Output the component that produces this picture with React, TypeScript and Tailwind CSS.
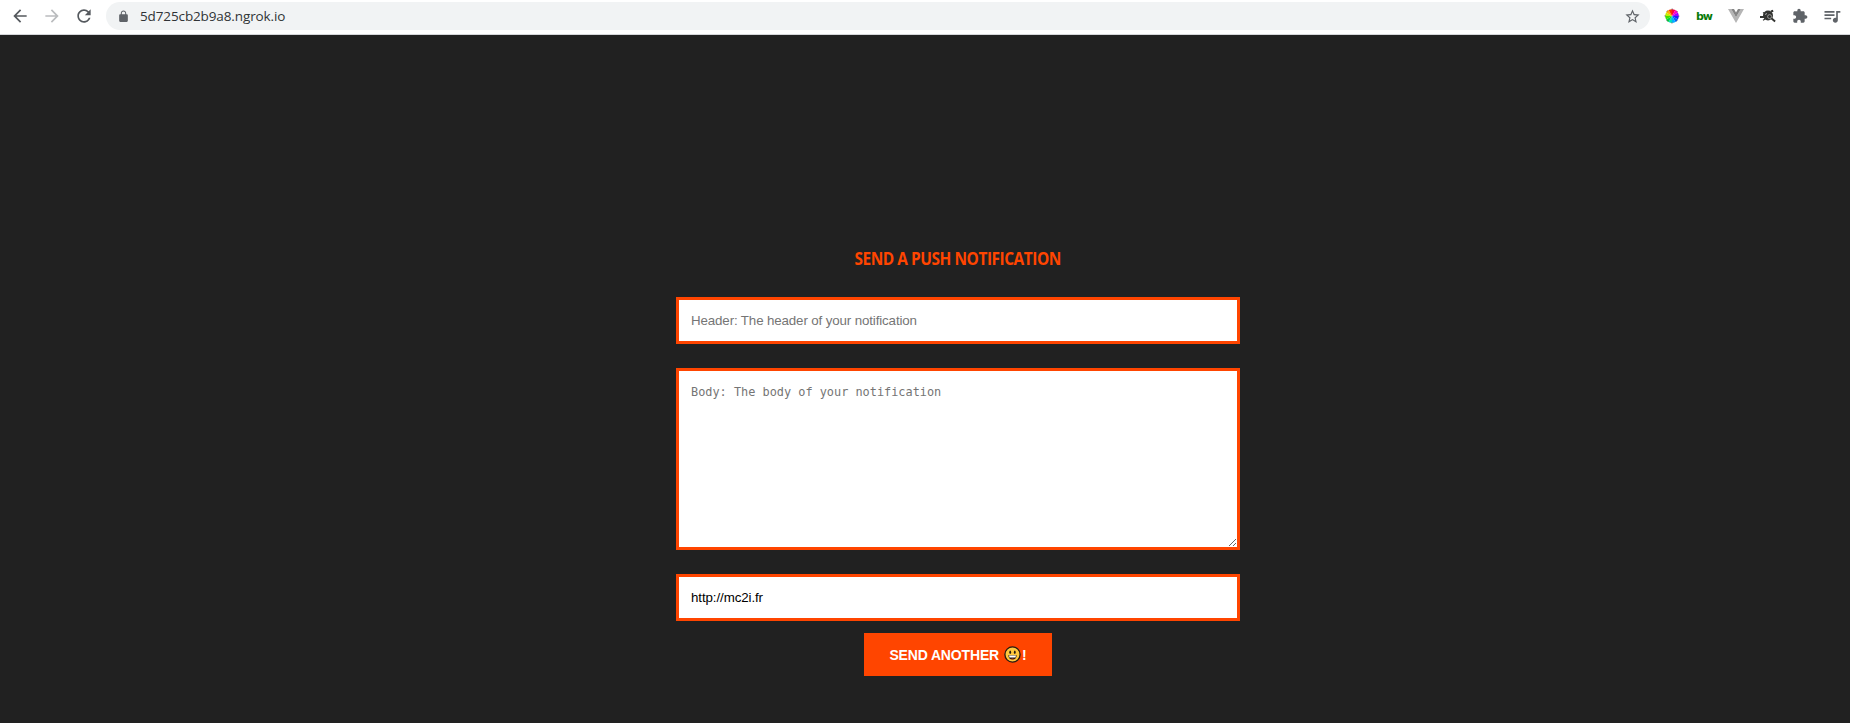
import React from "react";

const wheel = ["#ff0040", "#ff00c8", "#a000ff", "#2020ff", "#0060ff", "#00b0ff", "#00e0c0", "#00d040", "#40e000", "#c0f000", "#ffb000", "#ff3000"];

function ColorWheel() {
  return (
    <svg width="16" height="16" viewBox="0 0 16 16" className="block">
      {wheel.map((c, i) => {
        const a = ((i * 30 - 90) * Math.PI) / 180;
        const b = ((i * 30 - 60) * Math.PI) / 180;
        return (
          <path key={c} fill={c} d={`M8 8L${8 + 6.8 * Math.cos(a)} ${8 + 6.8 * Math.sin(a)}A6.8 6.8 0 0 1 ${8 + 6.8 * Math.cos(b)} ${8 + 6.8 * Math.sin(b)}Z`} />
        );
      })}
      <circle cx="8" cy="8" r="6.9" fill="none" stroke="#4a4a4a" strokeWidth="0.9" strokeDasharray="1.2 4.22" strokeDashoffset="0.6" />
    </svg>
  );
}

function Glyph({ d, fill = "#5f6368", size = 18 }: { d: string; fill?: string; size?: number }) {
  return (
    <svg width={size} height={size} viewBox="0 0 24 24" className="block shrink-0">
      <path d={d} fill={fill} />
    </svg>
  );
}

function Toolbar() {
  return (
    <header className="flex h-[35px] items-center border-b border-[#d5d7da] bg-white pb-0.5 pl-[10px] pr-2">
      <Glyph d="M20 11H7.83l5.59-5.59L12 4l-8 8 8 8 1.41-1.41L7.83 13H20v-2z" fill="#55595e" size={20} />
      <div className="ml-3">
        <Glyph d="M12 4l-1.41 1.41L16.17 11H4v2h12.17l-5.58 5.59L12 20l8-8z" fill="#babcbe" size={20} />
      </div>
      <div className="ml-3">
        <Glyph d="M17.65 6.35C16.2 4.9 14.21 4 12 4c-4.42 0-7.99 3.58-7.99 8s3.57 8 7.99 8c3.73 0 6.84-2.55 7.73-6h-2.08c-.82 2.33-3.04 4-5.65 4-3.31 0-6-2.69-6-6s2.69-6 6-6c1.66 0 3.14.69 4.22 1.78L13 11h7V4l-2.35 2.35z" fill="#55595e" size={20} />
      </div>
      <div className="ml-3 flex h-7 w-[1544px] items-center rounded-full bg-[#f1f3f4] pl-[11px] pr-[9px]">
        <Glyph d="M18 8h-1V6c0-2.76-2.24-5-5-5S7 3.24 7 6v2H6c-1.1 0-2 .9-2 2v10c0 1.1.9 2 2 2h12c1.1 0 2-.9 2-2V10c0-1.1-.9-2-2-2zM15.1 8H8.9V6c0-1.71 1.39-3.1 3.1-3.1s3.1 1.39 3.1 3.1v2z" size={13} />
        <span className="ml-[10px] grow font-['Open_Sans',sans-serif] text-[13.5px] leading-5 tracking-[-0.12px] text-[#303336]">5d725cb2b9a8.ngrok.io</span>
        <Glyph d="M22 9.24l-7.19-.62L12 2 9.19 8.63 2 9.24l5.46 4.73L5.82 21 12 17.27 18.18 21l-1.63-7.03L22 9.24zM12 15.4l-3.76 2.27 1-4.28-3.32-2.88 4.38-.38L12 6.1l1.71 4.04 4.38.38-3.32 2.88 1 4.28L12 15.4z" size={17} />
      </div>
      <div className="ml-[14px] flex items-center gap-4">
        <ColorWheel />
        <span className="flex h-4 w-4 items-center justify-center pt-0.5 font-['DejaVu_Sans',sans-serif] text-[11px] font-bold leading-4 tracking-[-0.9px] text-[#087a08]">bw</span>
        <svg width="16" height="16" viewBox="0 0 16 16" className="block">
          <path d="M0 1h3.2L8 9.3 12.8 1H16L8 15z" fill="#b5b5b5" />
          <path d="M3.2 1H6l2 3.4L10 1h2.8L8 9.3z" fill="#858585" />
        </svg>
        <svg width="16" height="16" viewBox="0 0 16 16" className="block">
          <circle cx="8" cy="7.5" r="5" fill="#333431" />
          <path d="M0 9h4M11 3.5l2.2-.8M10.5 9.5l4.6 4" stroke="#333431" strokeWidth="2" />
          <path d="M3 4.5l2 1M3 12.2l2.2-1.2" stroke="#333431" strokeWidth="1.2" />
          <circle cx="9.6" cy="8.6" r="2" fill="none" stroke="#bbb" strokeWidth=".7" />
          <path d="M5 6.5l2-1" stroke="#bbb" strokeWidth=".9" />
        </svg>
        <Glyph d="M20.5 11H19V7c0-1.1-.9-2-2-2h-4V3.5C13 2.12 11.88 1 10.5 1S8 2.12 8 3.5V5H4c-1.1 0-1.99.9-1.99 2v3.8H3.5c1.49 0 2.7 1.21 2.7 2.7s-1.21 2.7-2.7 2.7H2V20c0 1.1.9 2 2 2h3.8v-1.5c0-1.49 1.21-2.7 2.7-2.7 1.49 0 2.7 1.21 2.7 2.7V22H17c1.1 0 2-.9 2-2v-4h1.5c1.38 0 2.5-1.12 2.5-2.5S21.88 11 20.5 11z" size={16} />
        <div className="-ml-[2px]">
          <Glyph d="M15 6H3v2h12V6zm0 4H3v2h12v-2zM3 16h8v-2H3v2zM17 6v8.18c-.31-.11-.65-.18-1-.18-1.66 0-3 1.34-3 3s1.34 3 3 3 3-1.34 3-3V8h3V6h-5z" size={20} />
        </div>
      </div>
    </header>
  );
}

function Grin() {
  return (
    <svg width="17" height="17" viewBox="0 0 17 17" className="block">
      <circle cx="8.5" cy="8.5" r="7.6" fill="#ffc83d" stroke="#241b12" strokeWidth="1.3" />
      <ellipse cx="6.2" cy="6.2" rx=".9" ry="1.8" fill="#241b12" />
      <ellipse cx="10.8" cy="6.2" rx=".9" ry="1.8" fill="#241b12" />
      <path d="M4.3 9.3h8.4q-.3 4.2-4.2 4.2t-4.2-4.2z" fill="#241b12" />
      <path d="M5 9.6h7l-.4 2H5.4z" fill="#fff" />
      <path d="M6.9 12.9q1.6-1 3.2 0-1.6.8-3.2 0z" fill="#e8402a" />
    </svg>
  );
}

export default function App() {
  return (
    <div className="flex h-[723px] w-[1850px] flex-col overflow-hidden bg-[#212121]">
      <Toolbar />
      <main className="ml-[676px] flex w-[564px] flex-col items-center pt-[212px]">
        <h1 className="scale-x-[0.908] whitespace-nowrap font-['Open_Sans',sans-serif] text-[17px] font-bold leading-6 tracking-[-0.5px] text-[#ff4500]">SEND A PUSH NOTIFICATION</h1>
        <input
          className="mt-[26px] h-[47px] w-full border-[3px] border-[#ff4500] bg-white px-3 font-['Liberation_Sans',sans-serif] text-[13.333px] tracking-[-0.13px] text-black outline-none placeholder:text-[#757575]"
          placeholder="Header: The header of your notification"
        />
        <textarea
          className="mt-6 block h-[182px] w-full resize border-[3px] border-[#ff4500] bg-white px-3 py-[13px] font-['DejaVu_Sans_Mono',monospace] text-[11.88px] leading-4 text-black outline-none placeholder:text-[#757575]"
          placeholder="Body: The body of your notification"
        />
        <input
          className="mt-6 h-[47px] w-full border-[3px] border-[#ff4500] bg-white px-3 font-['Liberation_Sans',sans-serif] text-[13.333px] tracking-[-0.1px] text-black outline-none"
          defaultValue="http://mc2i.fr"
        />
        <button className="mt-3 flex h-[43px] w-[188px] items-center justify-center bg-[#ff4500] font-['Liberation_Sans',sans-serif] text-sm font-bold tracking-[-0.15px] text-white">
          <span>SEND ANOTHER</span>
          <span className="ml-[5px] mr-px"><Grin /></span>
          <span>!</span>
        </button>
      </main>
    </div>
  );
}
